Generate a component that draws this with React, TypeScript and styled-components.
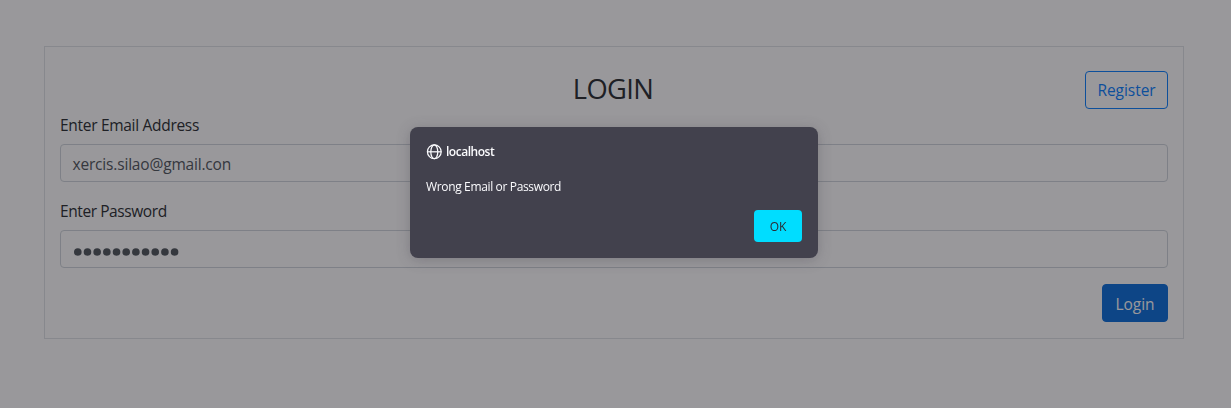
import React from "react";
import styled, { createGlobalStyle } from "styled-components";

const GlobalStyle = createGlobalStyle`
  *, *::before, *::after { box-sizing: border-box; }
  body {
    margin: 0;
    background: #fff;
    color: #212529;
    font: 400 15.5px/24px "Segoe UI", "Open Sans", "Noto Sans", sans-serif;
    overflow: hidden;
  }
`;

const Page = styled.main`
  min-height: 408px;
  padding: 46px 47px 0 44px;
`;

const Card = styled.form`
  height: 293px;
  padding: 24px 15px 15px;
  border: 1px solid #dee2e6;
`;

const Header = styled.header`
  display: grid;
  grid-template-columns: 1fr auto 1fr;
  align-items: start;
  height: 42px;
`;

const Title = styled.h1`
  grid-column: 2;
  margin: 1px 2px 0 0;
  font-size: 27.3px;
  font-weight: 400;
  line-height: 34px;
  letter-spacing: -0.65px;
`;

const Button = styled.button<{ $filled?: boolean; $width: number }>`
  justify-self: end;
  width: ${(p) => p.$width}px;
  height: 38px;
  padding: ${(p) => (p.$filled ? "2px 0 0" : "0")};
  border: 1px solid ${(p) => (p.$filled ? "#0069d9" : "#007bff")};
  border-radius: 4px;
  background: ${(p) => (p.$filled ? "#0069d9" : "transparent")};
  color: ${(p) => (p.$filled ? "#fff" : "#007bff")};
  font: inherit;
  letter-spacing: -0.05px;
`;

const Field = styled.div`
  margin-bottom: 17px;
`;

const Label = styled.label<{ $spacing: number }>`
  display: block;
  height: 31px;
  letter-spacing: ${(p) => p.$spacing}px;
`;

const Input = styled.div`
  display: flex;
  align-items: center;
  height: 38px;
  padding: 2px 11.5px 0;
  border: 1px solid #ced4da;
  border-radius: 4px;
  color: #495057;
  letter-spacing: -0.18px;
`;

const Dots = styled.svg`
  display: block;
  margin-top: 3px;
  fill: currentColor;
`;

const Actions = styled.div`
  display: flex;
  justify-content: flex-end;
  margin-top: -1px;
`;

const Overlay = styled.div`
  position: fixed;
  inset: 0;
  display: flex;
  align-items: flex-start;
  justify-content: center;
  padding: 127px 3px 0 0;
  background: rgba(28, 27, 34, 0.45);
`;

const Dialog = styled.section`
  display: flex;
  flex-direction: column;
  width: 408px;
  height: 131px;
  padding: 16px;
  border-radius: 8px;
  background: #42414d;
  box-shadow: 0 2px 14px rgba(58, 57, 68, 0.3);
  color: #fbfbfe;
  font-size: 12px;
  line-height: 18px;
`;

const Origin = styled.div`
  display: flex;
  align-items: center;
  gap: 4px;
  height: 18px;
  font-weight: 600;
  letter-spacing: -0.48px;
`;

const Message = styled.p`
  margin: 17px 0 14px;
  letter-spacing: -0.35px;
`;

const Confirm = styled.button`
  align-self: flex-end;
  width: 48px;
  height: 32px;
  padding: 2px 0 0;
  border: 0;
  border-radius: 4px;
  background: #00ddff;
  color: #2b2a33;
  font: inherit;
  font-weight: 500;
  letter-spacing: -0.2px;
`;

const Globe = () => (
  <svg width="16" height="16" viewBox="0 0 16 16" fill="none" stroke="currentColor" strokeWidth="1.25">
    <circle cx="8.3" cy="7.8" r="6.9" />
    <ellipse cx="8.3" cy="7.8" rx="3.5" ry="6.9" />
    <path d="M1.3 7.8h14" />
  </svg>
);

const PasswordMask = ({ length }: { length: number }) => (
  <Dots width="110" height="8" viewBox="0 0 110 8">
    {Array.from({ length }, (_, i) => (
      <circle key={i} cx={4.8 + i * 9.68} cy="4" r="3.8" />
    ))}
  </Dots>
);

export default function App() {
  return (
    <>
      <GlobalStyle />
      <Page>
        <Card>
          <Header>
            <Title>LOGIN</Title>
            <Button type="button" $width={83}>Register</Button>
          </Header>
          <Field>
            <Label $spacing={-0.3}>Enter Email Address</Label>
            <Input>xercis.silao@gmail.con</Input>
          </Field>
          <Field>
            <Label $spacing={-0.42}>Enter Password</Label>
            <Input><PasswordMask length={11} /></Input>
          </Field>
          <Actions>
            <Button type="button" $filled $width={66}>Login</Button>
          </Actions>
        </Card>
      </Page>
      <Overlay>
        <Dialog role="alertdialog">
          <Origin><Globe />localhost</Origin>
          <Message>Wrong Email or Password</Message>
          <Confirm type="button">OK</Confirm>
        </Dialog>
      </Overlay>
    </>
  );
}
